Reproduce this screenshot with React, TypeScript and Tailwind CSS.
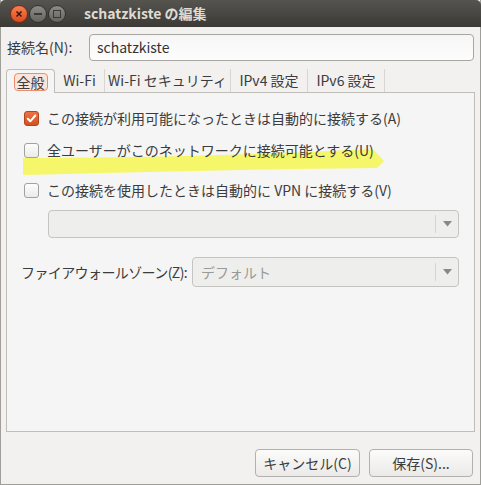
import React from 'react'

const font = { fontFamily: '"Noto Sans CJK JP", "DejaVu Sans", sans-serif' }

function Check({ checked }: { checked?: boolean }) {
  return checked ? (
    <span className="flex h-[15px] w-[15px] shrink-0 items-center justify-center rounded-[3px] border border-[#b2451c] bg-gradient-to-b from-[#ea7446] to-[#d4511f]">
      <svg width="11" height="11" viewBox="0 0 11 11">
        <path d="M1.8 5.8 L4.3 8.3 L9.3 2.5" fill="none" stroke="#fff" strokeWidth="2" strokeLinecap="round" strokeLinejoin="round" />
      </svg>
    </span>
  ) : (
    <span className="h-[15px] w-[15px] shrink-0 rounded-[3px] border border-[#a3a19d] bg-gradient-to-b from-[#fdfdfd] to-[#ebebea]" />
  )
}

function Combo({ text, className }: { text?: string; className?: string }) {
  return (
    <div className={`flex items-center rounded-[4px] border border-[#c6c4c1] bg-[#eeeeed] ${className ?? ''}`}>
      <span className="flex-1 pl-[8px] text-[14px] text-[#9a9996]">{text}</span>
      <span className="h-[18px] w-px bg-[#d6d5d3]" />
      <span className="flex w-[22px] justify-center">
        <svg width="9" height="6" viewBox="0 0 9 6">
          <path d="M0 0 H9 L4.5 5.5 Z" fill="#8a8986" />
        </svg>
      </span>
    </div>
  )
}

export default function App() {
  const tabs: [string, string][] = [
    ['Wi-Fi', 'w-[50px]'],
    ['Wi-Fi セキュリティ', 'w-[126px]'],
    ['IPv4 設定', 'w-[77px]'],
    ['IPv6 設定', 'w-[77px]'],
  ]
  return (
    <div className="h-[485px] w-[481px] overflow-hidden bg-[#f2f1f0] text-[#3c3c3c]" style={font}>
      <div className="flex h-full flex-col border border-t-0 border-[#a09e99]">
        {/* title bar */}
        <div className="-mx-px flex h-[27px] shrink-0 items-center rounded-t-[5px] bg-gradient-to-b from-[#55544f] to-[#3b3a36] pl-[10px]">
          <span className="flex h-[18px] w-[18px] items-center justify-center rounded-full border border-[#7a2c10] bg-gradient-to-b from-[#f68052] to-[#de4a18]">
            <svg width="8" height="8" viewBox="0 0 8 8">
              <path d="M1.5 1.5 L6.5 6.5 M6.5 1.5 L1.5 6.5" stroke="#3a1a0c" strokeWidth="1.6" />
            </svg>
          </span>
          <span className="ml-[1px] flex h-[18px] w-[18px] items-center justify-center rounded-full border border-[#33322f] bg-gradient-to-b from-[#8e8c86] to-[#66645f]">
            <span className="h-[2px] w-[8px] bg-[#3a3935]" />
          </span>
          <span className="ml-[1px] flex h-[18px] w-[18px] items-center justify-center rounded-full border border-[#33322f] bg-gradient-to-b from-[#8e8c86] to-[#66645f]">
            <span className="h-[8px] w-[8px] border-[1.5px] border-[#3a3935]" />
          </span>
          <span className="ml-[18px] text-[14px] font-bold text-[#dfdbd2]">schatzkiste の編集</span>
        </div>

        {/* name row */}
        <div className="mt-[7px] flex items-center px-[6px]">
          <span className="w-[82px] text-[14px]">接続名(N):</span>
          <div className="flex h-[27px] flex-1 items-center rounded-[4px] border border-[#a8a6a2] bg-gradient-to-b from-[#f6f6f6] to-[#fdfdfd] pl-[7px] text-[14px] text-[#333]">
            schatzkiste
          </div>
        </div>

        {/* notebook */}
        <div className="mt-[7px] flex flex-col px-[5px]">
          <div className="flex h-[24px] items-end text-[14px]">
            <div className="relative z-10 -mb-px flex h-[24px] w-[49px] items-center justify-center rounded-t-[4px] border border-b-0 border-[#c0bdb8] bg-[#f5f5f5]">
              <span className="rounded-[4px] border border-[#ee8c6c] bg-[#fbe4da] px-[2px] leading-[16px]">全般</span>
            </div>
            {tabs.map(([t, w]) => (
              <div key={t} className={`flex h-[23px] items-center justify-center border-r border-[#d8d6d2] ${w}`}>
                {t}
              </div>
            ))}
          </div>
          <div className="relative flex h-[340px] flex-col border border-[#c0bdb8] bg-[#f5f5f5] px-[17px] pt-[15px]">
            {/* highlighter stroke */}
            <svg className="pointer-events-none absolute left-[16px] top-[55px]" width="362" height="30" viewBox="0 0 362 30">
              <path d="M0 10 C120 10 250 6 350 1 L361 13 L354 20 C250 21 120 24 0 27 Z" fill="#f6f66a" />
            </svg>
            <label className="relative flex h-[20px] items-center gap-[8px] text-[14px]">
              <Check checked />
              この接続が利用可能になったときは自動的に接続する(A)
            </label>
            <label className="relative mt-[12px] flex h-[20px] items-center gap-[8px] text-[14px]">
              <Check />
              全ユーザーがこのネットワークに接続可能とする(U)
            </label>
            <label className="relative mt-[20px] flex h-[20px] items-center gap-[8px] text-[14px]">
              <Check />
              この接続を使用したときは自動的に VPN に接続する(V)
            </label>
            <Combo className="ml-[24px] mr-[-2px] mt-[10px] h-[28px]" />
            <div className="mr-[-2px] mt-[19px] flex items-center">
              <span className="-ml-[3px] w-[171px] whitespace-nowrap text-[14px] tracking-[-0.6px]">ファイアウォールゾーン(Z):</span>
              <Combo text="デフォルト" className="h-[30px] flex-1" />
            </div>
          </div>
        </div>

        {/* buttons */}
        <div className="mt-[17px] flex justify-end gap-[9px] pr-[7px]">
          <button className="h-[28px] w-[105px] rounded-[4px] border border-[#b3b1ad] bg-gradient-to-b from-[#fbfbfa] to-[#ebeae8] text-[14px] text-[#3c3c3c]">
            キャンセル(C)
          </button>
          <button className="h-[28px] w-[104px] rounded-[4px] border border-[#b3b1ad] bg-gradient-to-b from-[#fbfbfa] to-[#ebeae8] text-[14px] text-[#3c3c3c]">
            保存(S)...
          </button>
        </div>
      </div>
    </div>
  )
}
